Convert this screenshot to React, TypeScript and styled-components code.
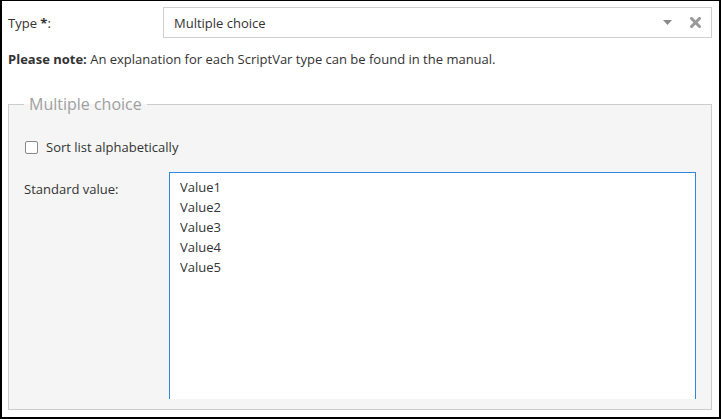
import React, { useEffect, useRef } from "react";
import styled, { createGlobalStyle } from "styled-components";

const GlobalStyle = createGlobalStyle`
  html, body {
    margin: 0;
    padding: 0;
    background: #fff;
  }
  body {
    font-family: "Open Sans", "Noto Sans", sans-serif;
    color: #333;
  }
`;

const Frame = styled.div`
  box-sizing: border-box;
  width: 721px;
  height: 419px;
  border-style: solid;
  border-color: #000;
  border-width: 1px 2px 2px 2px;
  padding: 6px 7px 0 6px;
  overflow: hidden;
  background: #fff;
`;

const TypeRow = styled.div`
  display: flex;
  align-items: center;
  height: 31px;
`;

const TypeLabel = styled.div`
  width: 155px;
  flex-shrink: 0;
  font-size: 13px;
`;

const SelectBox = styled.div`
  box-sizing: border-box;
  flex: 1;
  height: 31px;
  border: 1px solid #d0d0d0;
  display: flex;
  align-items: center;
  padding: 0 10px 0 10px;
  font-size: 13px;
  background: #fff;
`;

const SelectValue = styled.span`
  flex: 1;
`;

const SelectIcon = styled.span`
  display: flex;
  align-items: center;
  justify-content: center;
  margin-left: 18px;
`;

const Note = styled.p`
  margin: 12px 0 0;
  font-size: 13px;
  line-height: 18px;
  b {
    font-weight: 700;
  }
`;

const Group = styled.fieldset`
  margin: 26px 0 0;
  border: 1px solid #cccccc;
  background: #f5f5f5;
  padding: 23px 15px 10px 15px;
  min-width: 0;
`;

const GroupTitle = styled.legend`
  padding: 0 5px;
  margin-left: 0;
  font-size: 16px;
  line-height: 20px;
  color: #a0a0a0;
`;

const CheckRow = styled.label`
  display: flex;
  align-items: center;
  height: 20px;
  font-size: 13px;
  margin-left: 1px;
`;

const CheckBox = styled.span`
  box-sizing: border-box;
  width: 13px;
  height: 13px;
  border: 1px solid #8a8a8a;
  border-radius: 2px;
  background: #fff;
  margin-right: 8px;
`;

const FieldRow = styled.div`
  display: flex;
  margin-top: 15px;
`;

const FieldLabel = styled.div`
  width: 145px;
  flex-shrink: 0;
  font-size: 13px;
  line-height: 20px;
  padding-top: 7px;
`;

const AreaClip = styled.div`
  box-sizing: border-box;
  flex: 1;
  height: 227px;
  overflow: hidden;
  border: 1px solid #2f88db;
  border-bottom: 0;
  background: #fff;
`;

const ValueArea = styled.textarea`
  box-sizing: border-box;
  display: block;
  width: 100%;
  height: 260px;
  margin: 0;
  border: 0;
  outline: none;
  resize: none;
  padding: 4px 10px;
  font-family: "Open Sans", "Noto Sans", sans-serif;
  font-size: 13px;
  line-height: 20px;
  color: #333;
  caret-color: #000;
  background: #fff;
`;

const values = ["Value1", "Value2", "Value3", "Value4", "Value5"].join("\n");

export default function App() {
  const areaRef = useRef<HTMLTextAreaElement>(null);

  useEffect(() => {
    const el = areaRef.current;
    if (el) {
      el.focus();
      el.setSelectionRange(el.value.length, el.value.length);
    }
  }, []);

  return (
    <>
      <GlobalStyle />
      <Frame>
        <TypeRow>
          <TypeLabel>
            Type <b>*</b>:
          </TypeLabel>
          <SelectBox>
            <SelectValue>Multiple choice</SelectValue>
            <SelectIcon>
              <svg width="9" height="5" viewBox="0 0 9 5">
                <path d="M0 0 L9 0 L4.5 5 Z" fill="#8a8a8a" />
              </svg>
            </SelectIcon>
            <SelectIcon>
              <svg width="11" height="11" viewBox="0 0 11 11">
                <path
                  d="M1.5 1.5 L9.5 9.5 M9.5 1.5 L1.5 9.5"
                  stroke="#999"
                  strokeWidth="3"
                  strokeLinecap="square"
                />
              </svg>
            </SelectIcon>
          </SelectBox>
        </TypeRow>
        <Note>
          <b>Please note:</b> An explanation for each ScriptVar type can be
          found in the manual.
        </Note>
        <Group>
          <GroupTitle>Multiple choice</GroupTitle>
          <CheckRow>
            <CheckBox />
            Sort list alphabetically
          </CheckRow>
          <FieldRow>
            <FieldLabel>Standard value:</FieldLabel>
            <AreaClip>
              <ValueArea ref={areaRef} defaultValue={values} spellCheck={false} />
            </AreaClip>
          </FieldRow>
        </Group>
      </Frame>
    </>
  );
}
